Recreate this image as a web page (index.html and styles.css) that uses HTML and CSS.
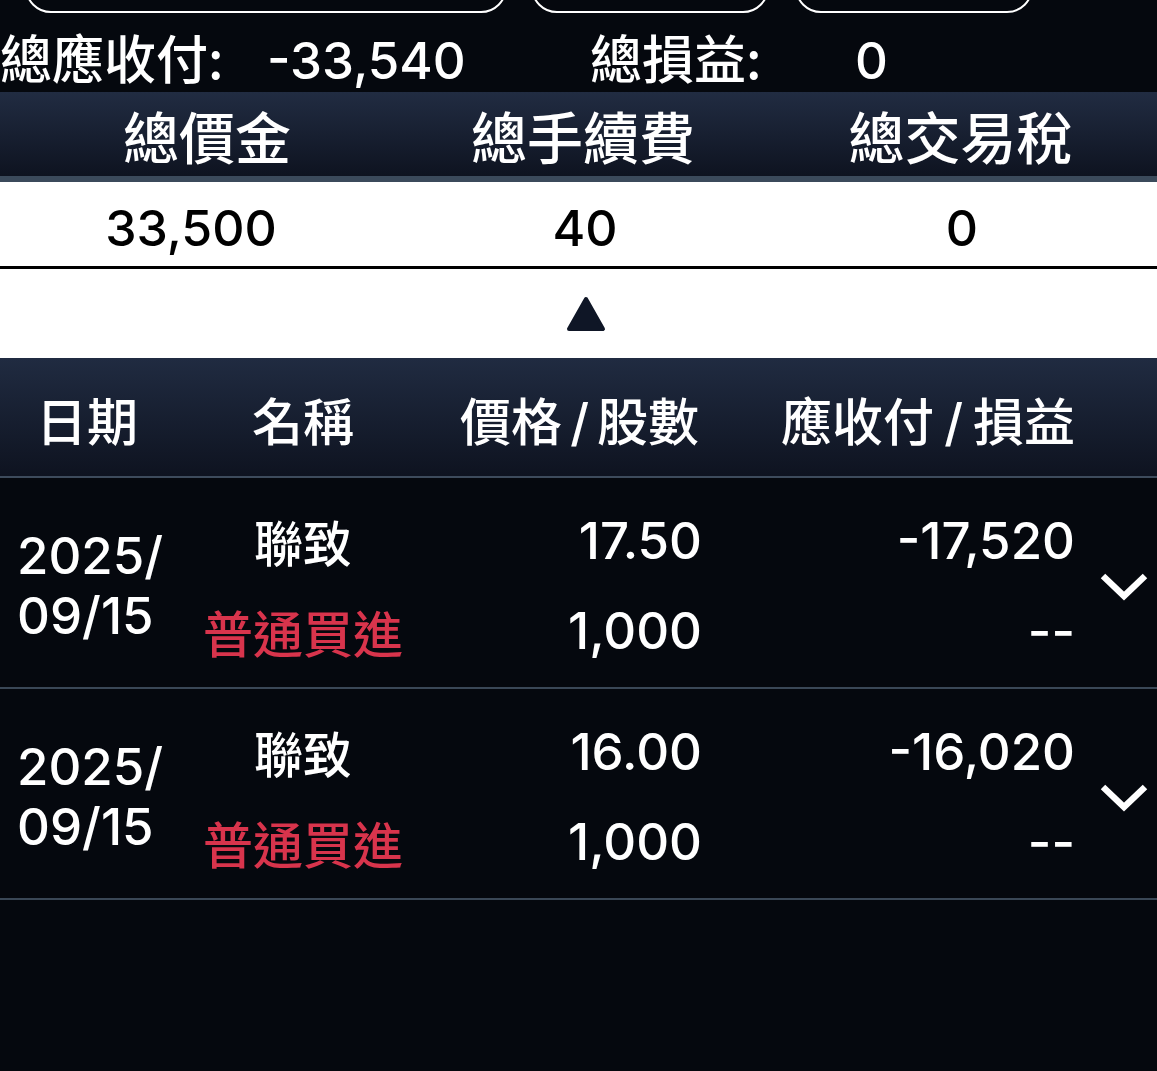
FILE: index.html
```html
<!DOCTYPE html>
<html lang="zh-Hant">
<head>
<meta charset="utf-8">
<title>交易明細</title>
<link rel="stylesheet" href="styles.css">
</head>
<body>
<div class="page">
  <div class="btn-row">
    <div class="btn btn-wide"></div>
    <div class="btn"></div>
    <div class="btn"></div>
  </div>

  <div class="summary">
    <div class="sum-group g1">
      <span class="sum-label">總應收付:</span>
      <span class="sum-value">-33,540</span>
    </div>
    <div class="sum-group g2">
      <span class="sum-label">總損益:</span>
      <span class="sum-value">0</span>
    </div>
  </div>

  <div class="totals-head">
    <div class="tcell">總價金</div>
    <div class="tcell">總手續費</div>
    <div class="tcell">總交易稅</div>
  </div>
  <div class="totals-vals">
    <div class="tcell num">33,500</div>
    <div class="tcell num">40</div>
    <div class="tcell num">0</div>
  </div>

  <div class="toggle">
    <svg class="tri" width="40" height="36" viewBox="0 0 40 36"><path d="M20 3 L37 33 L3 33 Z" fill="#0f1626" stroke="#0f1626" stroke-width="4" stroke-linejoin="round"/></svg>
  </div>

  <div class="list-head grid">
    <div class="h-date">日期</div>
    <div class="h-name">名稱</div>
    <div class="h-price">價格<span class="sl">/</span>股數</div>
    <div class="h-amt">應收付<span class="sl">/</span>損益</div>
    <div></div>
  </div>

  <div class="row grid">
    <div class="c-date num"><span>2025/</span><span>09/15</span></div>
    <div class="c-name"><span>聯致</span><span class="red">普通買進</span></div>
    <div class="c-price num"><span>17.50</span><span>1,000</span></div>
    <div class="c-amt num"><span>-17,520</span><span>--</span></div>
    <div class="c-chev"><svg width="48" height="30" viewBox="0 0 48 30"><polyline points="3,5 24,25 45,5" fill="none" stroke="#fff" stroke-width="6.5"/></svg></div>
  </div>

  <div class="row grid">
    <div class="c-date num"><span>2025/</span><span>09/15</span></div>
    <div class="c-name"><span>聯致</span><span class="red">普通買進</span></div>
    <div class="c-price num"><span>16.00</span><span>1,000</span></div>
    <div class="c-amt num"><span>-16,020</span><span>--</span></div>
    <div class="c-chev"><svg width="48" height="30" viewBox="0 0 48 30"><polyline points="3,5 24,25 45,5" fill="none" stroke="#fff" stroke-width="6.5"/></svg></div>
  </div>
</div>
</body>
</html>
```

FILE: styles.css
```css
html, body {
  margin: 0;
  padding: 0;
  background: #05080e;
}
.page {
  width: 1157px;
  min-height: 1071px;
  background: #05080e;
  color: #fff;
  font-family: Inter, "Noto Sans CJK TC", sans-serif;
  overflow: hidden;
}
.num {
  font-family: Inter, "Noto Sans CJK TC", sans-serif;
}

/* top buttons (scrolled, only bottoms visible) */
.btn-row {
  height: 14px;
  overflow: hidden;
  display: flex;
  align-items: flex-end;
  padding-left: 25px;
  gap: 24px;
}
.btn {
  flex: none;
  width: 238px;
  height: 60px;
  box-sizing: border-box;
  border: 2.5px solid #fff;
  border-radius: 26px;
  margin-bottom: 1px;
}
.btn-wide { width: 482px; }
.btn-row .btn:nth-child(3) { margin-left: 2px; }

/* summary */
.summary {
  height: 78px;
  display: flex;
  align-items: center;
  font-size: 52px;
  font-family: "Noto Sans CJK TC", sans-serif;
  font-weight: 500;
  padding-top: 6px;
  box-sizing: border-box;
}
.sum-group { display: flex; align-items: baseline; }
.g1 { width: 590px; padding-left: 0; box-sizing: border-box; }
.sum-label { display: inline-block; }
.g1 .sum-label { width: 267px; }
.g2 .sum-label { width: 265px; }
.sum-value {
  font-family: Inter, sans-serif;
  font-weight: 500;
  font-size: 51px;
}

/* totals */
.totals-head {
  display: grid;
  grid-template-columns: 386px 394px 377px;
  height: 84px;
  background: linear-gradient(#212c42, #0e1320);
  border-bottom: 6px solid #3b4a5b;
  font-family: "Noto Sans CJK TC", sans-serif;
  font-weight: 500;
  font-size: 56px;
}
.tcell {
  display: flex;
  align-items: center;
  justify-content: center;
}
.totals-head .tcell:first-child { padding-left: 28px; }
.totals-head .tcell:last-child { padding-right: 16px; }
.totals-vals {
  display: grid;
  grid-template-columns: 382px 406px 369px;
  height: 84px;
  background: #fff;
  color: #000;
  font-size: 50px;
  font-weight: 500;
  border-bottom: 3px solid #000;
}
.totals-vals .tcell { padding-top: 8px; }
.totals-vals .tcell:last-child { padding-right: 21px; }

.toggle {
  height: 89px;
  background: #fff;
  display: flex;
  justify-content: center;
  align-items: center;
  padding-left: 14px;
  box-sizing: border-box;
}

/* list */
.grid {
  display: grid;
  grid-template-columns: 190px 226px 286px 373px 82px;
}
.list-head {
  height: 120px;
  background: linear-gradient(#202b41, #0e1320);
  border-bottom: 2px solid #3d4b5c;
  font-family: "Noto Sans CJK TC", sans-serif;
  font-weight: 500;
  font-size: 51px;
  align-items: center;
  padding-top: 4px;
  box-sizing: border-box;
}
.h-date { padding-left: 36px; }
.h-name { text-align: center; }
.h-price { text-align: right; padding-right: 3px; }
.h-amt { text-align: right; padding-right: 0; }
.sl { font-family: Inter, sans-serif; font-weight: 500; margin: 0 8px; }
.h-amt .sl { margin: 0 10px; }

.row {
  height: 211px;
  box-sizing: border-box;
  border-bottom: 2px solid #3a4756;
  align-items: center;
  padding-top: 6px;
}
.row > div {
  display: flex;
  flex-direction: column;
}
.c-date {
  padding-left: 17px;
  font-size: 51px;
  line-height: 60px;
  font-weight: 500;
}
.c-name {
  align-items: center;
  font-family: "Noto Sans CJK TC", sans-serif;
  font-weight: 500;
  line-height: 90px;
}
.c-name span:first-child { font-size: 49px; }
.c-name span.red { font-size: 50px; color: #d8344c; }
.c-price, .c-amt {
  align-items: flex-end;
  font-size: 51px;
  line-height: 90px;
  font-weight: 500;
}
.c-chev {
  align-items: flex-start;
  padding-left: 25px;
}
.c-chev svg { display: block; }
```
